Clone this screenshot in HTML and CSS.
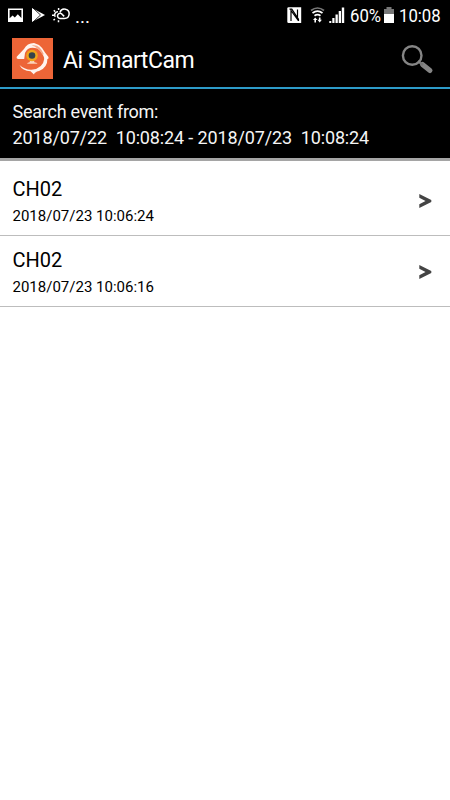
FILE: index.html
```html
<!DOCTYPE html>
<html lang="en">
  <head>
    <meta charset="UTF-8" />
    <meta name="viewport" content="width=device-width, initial-scale=1.0" />
    <title>Ai SmartCam</title>
    <link rel="stylesheet" href="styles.css">
  </head>
  <body>
    <div class="status-bar">
      <svg class="status-left" width="72" height="30" viewBox="0 0 72 30">
        <!-- picture -->
        <path fill="#fff" fill-rule="evenodd" d="M8 8.500h15V22H8zM9.600 10v8.200l3-2.800 2.200 2.100 3-3.200 3.600 3.600V10z" />
        <!-- play store -->
        <path fill="#fff" d="M32 8l13 7-13 7z" />
        <path fill="none" stroke="#000" stroke-width=".8" d="M33 8l7.500 7-7.500 7" />
        <!-- weather -->
        <g fill="none" stroke="#fff" stroke-width="1.500">
          <path d="M60 18.500h4.500A4.700 4.700 0 1 0 60 12.300M60 18.500a2.600 2.600 0 1 1 2.300-4l1.900 1.900M58 11.800a3.200 3.200 0 0 0-2.800 5" />
          <path d="M52 15.200h2M53.800 10.300l1.300 1.300M58.600 8v2M53.500 20.300l1.400-1.300M58.500 20.300v2" />
        </g>
      </svg>
      <span class="more">...</span>
      <svg class="status-right" width="60" height="30" viewBox="0 0 60 30">
        <!-- nfc -->
        <path fill="#fff" d="M2.500 7.300h12.700V23H2.500q-1.200 0-1.200-1.200V8.500q0-1.200 1.200-1.200z" />
        <path fill="none" stroke="#000" stroke-width="1.200" d="M5 21V10.500l6.500 9V9.500M3.500 9.200h2.300l6.700 10V21" />
        <!-- wifi -->
        <g fill="none" stroke="#fff" stroke-width="1.700">
          <path stroke="#777" d="M25 10.500q6.500-5 13 0" />
          <path d="M26.500 13q5-3.700 10 0M28.500 15.800q3-2.200 6 0" />
        </g>
        <path fill="#fff" d="M27 20l2.200-2.500 2.200 2.500h-1.400v2.500h-1.600V20zM31.500 19.800h1.400v-2.300h1.600v2.300h1.400l-2.200 2.700z" />
        <!-- signal -->
        <path fill="#fff" d="M43.300 21h2v2h-2zM46.300 18h2.200v5h-2.200zM49.500 14.500h2.300V23h-2.300zM52.700 11H55v12h-2.300zM55.800 7.500h2.400V23h-2.400z" />
      </svg>
      <span class="percent">60%</span>
      <svg class="battery" width="10" height="30" viewBox="0 0 10 30">
        <path fill="#777" d="M2.500 7h5v2H10v5H0V9h2.500z" />
        <path fill="#fff" d="M0 14h10v9H0z" />
      </svg>
      <span class="time">10:08</span>
    </div>

    <header class="app-bar">
      <svg class="logo" width="41" height="41" viewBox="0 0 41 41">
        <path fill="#ed6537" d="M0 0h41v41H0z" />
        <!-- roof -->
        <path fill="#fff4ee" d="M4.700 18.800L12 11q3-6 10-6l5 2q4 3 6 7.500l3.500 4.500q.5 2-1 2h-3q-2-7-7-10.500Q16 7.500 13 15l-.8 6H6q-2-.2-1.300-2.200z" />
        <path fill="#f5a88a" d="M19.500 7.500q8-2 12.500 9l-2-.5q-4-7-10.500-8.500z" />
        <!-- swirl -->
        <path fill="#fff4ee" d="M32.500 20h3q0 10-8.500 13-4.500 1-5 3.500l-3.500-3.200Q10.500 33 7.500 27q5.500 5 12 4.800 11.500-1 13-11.800z" />
        <!-- camera -->
        <path fill="#fbd5bd" d="M18 23h4l.5 1.300q2.500.2 3 1.500H15q.5-1.300 2.500-1.500z" />
        <circle cx="20" cy="17.500" r="5.800" fill="#f0a51c" />
        <circle cx="20" cy="17.500" r="3.300" fill="#35434c" />
      </svg>
      <h1>Ai SmartCam</h1>
      <svg class="search-icon" width="34" height="30" viewBox="0 0 34 30">
        <path stroke="#858585" stroke-width="5" stroke-linecap="round" d="M21.500 19.500l7.500 6" />
        <path stroke="#777" stroke-width="2.500" d="M17 16l5 4" />
        <circle cx="11.200" cy="10.500" r="9.300" fill="none" stroke="#858585" stroke-width="2.400" />
      </svg>
    </header>

    <div class="search-range">
      <p class="label">Search event from:</p>
      <p>2018/07/22&nbsp; 10:08:24 - 2018/07/23&nbsp; 10:08:24</p>
    </div>

    <ul class="event-list">
      <li>
        <div>
          <h2>CH02</h2>
          <p>2018/07/23 10:06:24</p>
        </div>
        <svg class="arrow" width="14" height="14" viewBox="0 0 14 14">
          <path fill="#444" d="M1.300 0L13.300 6v2l-12 6v-3.700L7.500 7 1.300 3.700z" />
        </svg>
      </li>
      <li>
        <div>
          <h2>CH02</h2>
          <p>2018/07/23 10:06:16</p>
        </div>
        <svg class="arrow" width="14" height="14" viewBox="0 0 14 14">
          <path fill="#444" d="M1.300 0L13.300 6v2l-12 6v-3.700L7.500 7 1.300 3.700z" />
        </svg>
      </li>
    </ul>
  </body>
</html>
```

FILE: styles.css
```css
* {
  box-sizing: border-box;
}
body {
  margin: 0;
  background-color: #fff;
  color: #000;
  font-family: Roboto, sans-serif;
}
h1,
h2,
p,
ul {
  margin: 0;
  padding: 0;
  font-weight: normal;
}
svg {
  display: block;
  flex-shrink: 0;
}
.status-bar {
  display: flex;
  height: 30px;
  background-color: #000;
  color: #fff;
  font-size: 19px;
  line-height: 31px;
}
.more {
  width: 20px;
  margin-left: 3px;
  line-height: 33px;
}
.status-right {
  margin-left: 191px;
}
.percent,
.time {
  transform: scaleX(0.88);
  transform-origin: left;
  white-space: nowrap;
}
.percent {
  width: 32px;
  margin-left: 4px;
}
.battery {
  margin-left: 2px;
}
.time {
  margin-left: 5px;
}
.app-bar {
  display: flex;
  align-items: center;
  height: 59px;
  padding: 0 15px 0 12px;
  background-color: #000;
  border-bottom: 2px solid #2d9bc9;
  color: #fff;
}
.app-bar h1 {
  flex: 1;
  margin-left: 10px;
  padding-top: 4px;
  font-size: 23px;
  line-height: 28px;
  letter-spacing: -0.45px;
}
.search-icon {
  margin-top: 3px;
}
.search-range {
  height: 72px;
  padding: 10px 12px 0 12.5px;
  background-color: #000;
  border-bottom: 3px solid #a5a5a5;
  color: #f5f5f5;
  font-size: 18px;
  line-height: 26px;
  letter-spacing: -0.13px;
}
.search-range .label {
  letter-spacing: -0.25px;
}
.event-list {
  list-style: none;
}
.event-list li {
  display: flex;
  align-items: center;
  justify-content: space-between;
  height: 71px;
  padding: 0 18px 0 12.5px;
  border-bottom: 1px solid #bdbdbd;
}
.event-list li:first-child {
  height: 75px;
  padding-top: 4px;
}
.event-list div {
  padding-top: 5px;
}
.event-list h2 {
  font-size: 20px;
  line-height: 28px;
}
.event-list p {
  font-size: 15px;
  line-height: 27px;
}
.arrow {
  margin-top: 1px;
}
```
